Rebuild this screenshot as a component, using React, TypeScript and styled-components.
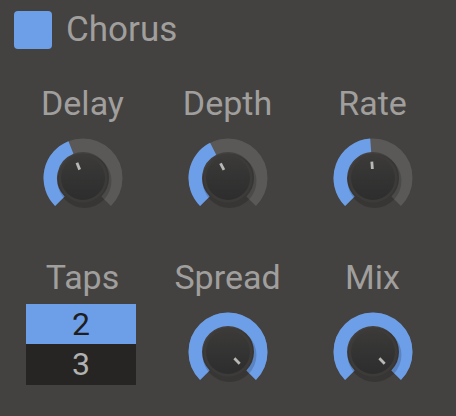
import React from 'react';
import styled, { createGlobalStyle } from 'styled-components';

const BLUE = '#6d9fe9';

const GlobalStyle = createGlobalStyle`
  html, body {
    margin: 0;
    padding: 0;
    background: #434240;
  }
  body {
    font-family: Roboto, "Liberation Sans", sans-serif;
  }
`;

const Panel = styled.div`
  width: 456px;
  height: 416px;
  box-sizing: border-box;
  padding: 11px 11px 0 10px;
  background: #434240;
  overflow: hidden;
`;

const Header = styled.div`
  display: flex;
  align-items: center;
  gap: 14px;
  padding-left: 4px;
  height: 38px;
`;

const Check = styled.div`
  width: 38px;
  height: 38px;
  border-radius: 4px;
  background: ${BLUE};
`;

const Title = styled.div`
  font-size: 35px;
  line-height: 38px;
  color: #a09f9d;
`;

const Grid = styled.div`
  display: grid;
  grid-template-columns: repeat(3, 145px);
  row-gap: 39px;
  margin-top: 34px;
`;

const Cell = styled.div`
  display: flex;
  flex-direction: column;
  align-items: center;
`;

const Label = styled.div`
  font-size: 34px;
  line-height: 40px;
  height: 40px;
  color: #a09f9d;
`;

const KnobBox = styled.svg`
  display: block;
  width: 80px;
  height: 80px;
  margin-top: 15px;
`;

const List = styled.div`
  margin: 7px 3px 0 0;
  width: 110px;
  display: flex;
  flex-direction: column;
`;

const Item = styled.div<{ $on?: boolean }>`
  height: 40px;
  line-height: 40px;
  text-align: center;
  font-size: 32px;
  background: ${(p) => (p.$on ? BLUE : '#262524')};
  color: ${(p) => (p.$on ? '#1e1e1e' : '#b2b2b1')};
  & + & {
    height: 41px;
  }
`;

const pt = (r: number, a: number) => {
  const rad = (a * Math.PI) / 180;
  return [r * Math.sin(rad), -r * Math.cos(rad)];
};

const arc = (r: number, a0: number, a1: number) => {
  const [x0, y0] = pt(r, a0);
  const [x1, y1] = pt(r, a1);
  const large = a1 - a0 > 180 ? 1 : 0;
  return `M ${x0} ${y0} A ${r} ${r} 0 ${large} 1 ${x1} ${y1}`;
};

const Knob: React.FC<{ value: number; id: string }> = ({ value, id }) => {
  const end = -135 + 270 * value;
  const [px0, py0] = pt(9, end);
  const [px1, py1] = pt(16.5, end);
  return (
    <KnobBox viewBox="-40 -40 80 80">
      <defs>
        <linearGradient id={`face-${id}`} x1="0" y1="0" x2="0" y2="1">
          <stop offset="0" stopColor="#3b3a39" />
          <stop offset="1" stopColor="#2d2d2d" />
        </linearGradient>
      </defs>
      <path d={arc(32.75, -135, 135)} stroke="#5a5958" strokeWidth="13.5" fill="none" />
      {value > 0 && (
        <path d={arc(32.75, -135, end)} stroke={BLUE} strokeWidth="13.5" fill="none" />
      )}
      <circle cx="1.5" cy="3" r="27" fill="rgba(0,0,0,0.17)" />
      <circle r="24.5" fill="#3c3b3a" />
      <circle r="22" fill={`url(#face-${id})`} />
      <line x1={px0} y1={py0} x2={px1} y2={py1} stroke="#b8b8b7" strokeWidth="2.8" />
    </KnobBox>
  );
};

const knobs = [
  { name: 'Delay', value: 0.42 },
  { name: 'Depth', value: 0.4 },
  { name: 'Rate', value: 0.485 },
];

const App: React.FC = () => (
  <Panel>
    <GlobalStyle />
    <Header>
      <Check />
      <Title>Chorus</Title>
    </Header>
    <Grid>
      {knobs.map((k) => (
        <Cell key={k.name}>
          <Label>{k.name}</Label>
          <Knob value={k.value} id={k.name} />
        </Cell>
      ))}
      <Cell>
        <Label>Taps</Label>
        <List>
          <Item $on>2</Item>
          <Item>3</Item>
        </List>
      </Cell>
      <Cell>
        <Label>Spread</Label>
        <Knob value={1} id="Spread" />
      </Cell>
      <Cell>
        <Label>Mix</Label>
        <Knob value={1} id="Mix" />
      </Cell>
    </Grid>
  </Panel>
);

export default App;
